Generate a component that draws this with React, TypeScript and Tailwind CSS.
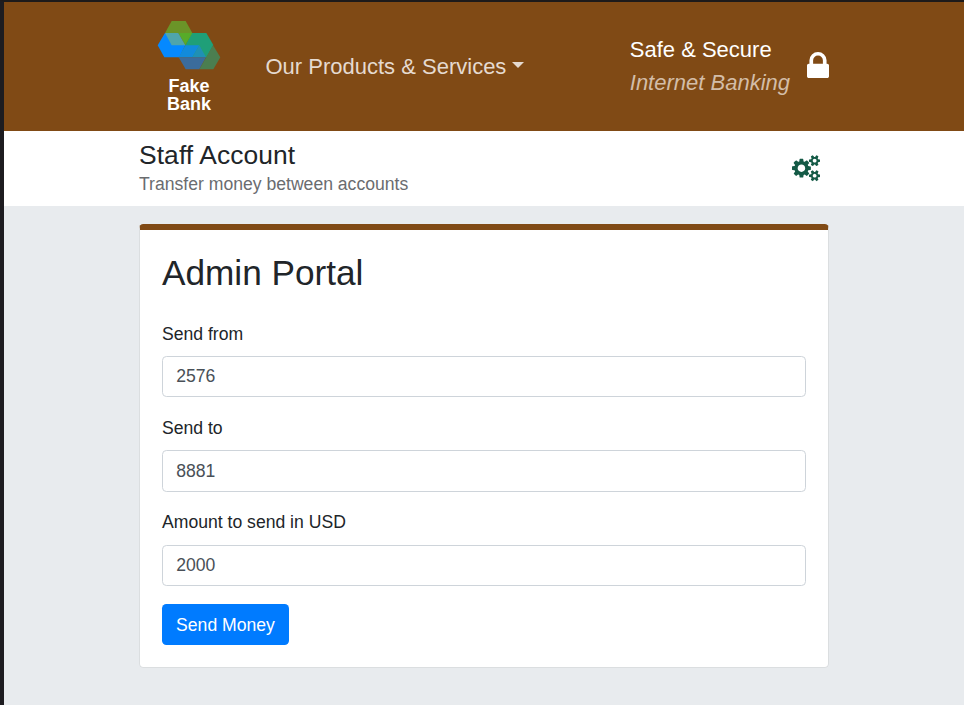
import React from "react";

const SMALL_GEAR =
  "v140q0 16-149 31-12 27-30 52 51 113 51 138 0 4-4 7-122 71-124 71-8 0-46-47t-52-68q-20 2-30 2t-30-2q-14 21-52 68t-46 47q-2 0-124-71-4-3-4-7 0-25 51-138-18-25-30-52-149-15-149-31v-140q0-16 149-31 13-29 30-52-51-113-51-138 0-4 4-7 4-2 35-20t59-34 30-16q8 0 46 46.500t52 67.500q20-2 30-2t30 2q51-71 92-112l6-2q4 0 124 70 4 3 4 7 0 25-51 138 17 23 30 52 149 15 149 31z";

function CogsIcon() {
  return (
    <svg viewBox="0 0 1920 1792" className="h-[26.4px] w-[28.3px] fill-[#145a46]">
      <path
        fillRule="evenodd"
        d={
          "M896 896q0-106-75-181t-181-75-181 75-75 181 75 181 181 75 181-75 75-181zm768 512q0-52-38-90t-90-38-90 38-38 90q0 53 37.500 90.500t90.500 37.500 90.500-37.500 37.500-90.500zm0-1024q0-52-38-90t-90-38-90 38-38 90q0 53 37.500 90.500t90.500 37.500 90.500-37.500 37.500-90.500zm-384 421v185q0 10-7 19.500t-16 10.500l-155 24q-11 35-32 76 34 48 90 115 7 11 7 20 0 12-7 19-23 30-82.500 89.500t-78.500 59.500q-11 0-21-7l-115-90q-37 19-77 31-11 108-23 155-7 24-30 24h-186q-11 0-20-7.500t-10-17.500l-23-153q-34-10-75-31l-118 89q-7 7-20 7-11 0-21-8-144-133-144-160 0-9 7-19 10-14 41-53t47-61q-23-44-35-82l-152-24q-10-1-17-9.500t-7-19.500v-185q0-10 7-19.500t16-10.500l155-24q11-35 32-76-34-48-90-115-7-11-7-20 0-12 7-20 22-30 82-89t79-59q11 0 21 7l115 90q34-18 77-32 11-108 23-154 7-24 30-24h186q11 0 20 7.500t10 17.500l23 153q34 10 75 31l118-89q8-7 20-7 11 0 21 8 144 133 144 160 0 8-7 19-12 16-42 54t-45 60q23 48 34 82l152 23q10 2 17 10.500t7 19.500z" +
          "M1920 1338" + SMALL_GEAR +
          "M1920 314" + SMALL_GEAR
        }
      />
    </svg>
  );
}

function LockIcon() {
  return (
    <svg viewBox="320 128 1152 1408" preserveAspectRatio="none" className="h-[26px] w-[22px] fill-white">
      <path d="M640 768h512v-192q0-106-75-181t-181-75-181 75-75 181v192zm832 96v576q0 40-28 68t-68 28h-960q-40 0-68-28t-28-68v-576q0-40 28-68t68-28h32v-192q0-184 132-316t316-132 316 132 132 316v192h32q40 0 68 28t28 68z" />
    </svg>
  );
}

function Logo() {
  return (
    <div className="mt-[18px] ml-[18px] w-[66px]">
      <svg viewBox="51 30 198 156" className="block h-[52px] w-[66px]">
        <polygon points="95,33 137,33 157,69 75,69" fill="#6b9428" />
        <polygon points="155,69 199,69 220,105 200,142 118,142" fill="#1f9f78" />
        <polygon points="75,69 136,105 118,142 73,142 53,106" fill="#0589ff" />
        <polygon points="115,69 157,69 136,106" fill="#57ab29" />
        <polygon points="75,69 115,69 136,106 95,106" fill="#4fa5ab" />
        <polygon points="136,106 178,106 157,142 116,142" fill="#128bdb" />
        <polygon points="178,106 198,142 157,142" fill="#2090b4" />
        <polygon points="116,142 198,142 178,178 137,178" fill="#3b6c9c" />
        <polygon points="219,106 241,142 220,178 178,178" fill="#4b7e50" />
      </svg>
      <div className="mt-[5px] pr-[2px] text-center text-[18px] leading-[18px] font-bold text-white">
        <div className="h-[18px]">Fake</div>
        <div className="h-[18px]">Bank</div>
      </div>
    </div>
  );
}

function Field({ label, value }: { label: string; value: string }) {
  return (
    <div className="mb-[17.9px]">
      <label className="mb-[8.1px] block leading-[27.1px]">{label}</label>
      <input
        defaultValue={value}
        className="block h-[41.2px] w-full rounded-[4.4px] border border-[#ced4da] bg-white px-[13.2px] pt-[0.6px] text-[#495057] outline-none"
      />
    </div>
  );
}

export default function App() {
  return (
    <div className="h-[705px] overflow-hidden border-t-2 border-l-4 border-t-[#1d1a1a] border-l-[#1d1c20] bg-[#e8ebee] font-['Liberation_Sans',Arial,sans-serif] text-[17.6px] text-[#212529]">
      <header className="h-[129px] bg-[#804a15]">
        <div className="ml-[135px] flex h-full w-[690px]">
          <Logo />
          <div className="ml-[42.5px] flex h-[129px] items-center text-[22px] whitespace-nowrap text-[#e5dad0]">
            <span>Our Products &amp; Services</span>
            <span className="mt-[-3px] ml-[5.5px] border-x-[6px] border-t-[6px] border-x-transparent border-t-[#e5dad0]" />
          </div>
          <div className="mt-[31px] ml-auto text-[22px] leading-[33px] whitespace-nowrap">
            <div className="text-white">Safe &amp; Secure</div>
            <div className="text-[#d3bda8] italic">Internet Banking</div>
          </div>
          <div className="mt-[50px] ml-[17px]">
            <LockIcon />
          </div>
        </div>
      </header>
      <section className="h-[75px] bg-white">
        <div className="ml-[135px] flex w-[690px] justify-between">
          <div className="pt-[9px]">
            <h1 className="text-[26.4px] leading-[31px] tracking-[0.09px]">Staff Account</h1>
            <p className="leading-[26px] text-[#6a6c6f]">Transfer money between accounts</p>
          </div>
          <div className="mt-[24.2px] mr-[8.7px]">
            <CogsIcon />
          </div>
        </div>
      </section>
      <main className="mt-[18px] ml-[135px] h-[444px] w-[690px] rounded-[4.4px] border border-t-[6px] border-[#dbdee0] border-t-[#804a15] bg-white px-[22px] pt-[22px]">
        <h2 className="mb-[26.7px] text-[35.2px] leading-[42.2px]">Admin Portal</h2>
        <Field label="Send from" value="2576" />
        <Field label="Send to" value="8881" />
        <Field label="Amount to send in USD" value="2000" />
        <button className="h-[41.2px] w-[127px] rounded-[4.4px] bg-[#007bff] pt-px text-white">Send Money</button>
      </main>
    </div>
  );
}
